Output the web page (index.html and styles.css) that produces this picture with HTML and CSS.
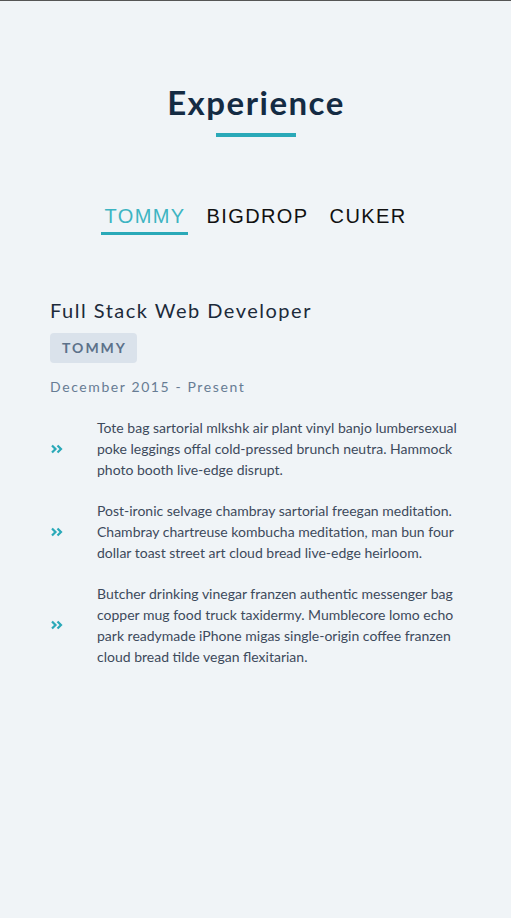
FILE: index.html
```html
<!DOCTYPE html>
<html>
<head>
<meta charset="utf-8">
<link rel="stylesheet" href="styles.css">
</head>
<body>
<section class="experience">
  <h1 class="title">Experience</h1>
  <div class="title-bar"></div>
  <nav class="tabs">
    <span class="tab active">TOMMY</span>
    <span class="tab">BIGDROP</span>
    <span class="tab">CUKER</span>
  </nav>
  <article class="job">
    <h2 class="job-title">Full Stack Web Developer</h2>
    <span class="badge">TOMMY</span>
    <p class="date">December 2015 - Present</p>
    <ul class="duties">
      <li class="duty">
        <svg class="icon" viewBox="0 0 12 10" width="12" height="10"><path d="M1 1.5 L4.5 5 L1 8.5 M6.5 1.5 L10 5 L6.5 8.5" fill="none" stroke="#2aa9b8" stroke-width="2.2"/></svg>
        <p>Tote bag sartorial mlkshk air plant vinyl banjo lumbersexual poke leggings offal cold-pressed brunch neutra. Hammock photo booth live-edge disrupt.</p>
      </li>
      <li class="duty">
        <svg class="icon" viewBox="0 0 12 10" width="12" height="10"><path d="M1 1.5 L4.5 5 L1 8.5 M6.5 1.5 L10 5 L6.5 8.5" fill="none" stroke="#2aa9b8" stroke-width="2.2"/></svg>
        <p>Post-ironic selvage chambray sartorial freegan meditation. Chambray chartreuse kombucha meditation, man bun four dollar toast street art cloud bread live-edge heirloom.</p>
      </li>
      <li class="duty">
        <svg class="icon" viewBox="0 0 12 10" width="12" height="10"><path d="M1 1.5 L4.5 5 L1 8.5 M6.5 1.5 L10 5 L6.5 8.5" fill="none" stroke="#2aa9b8" stroke-width="2.2"/></svg>
        <p>Butcher drinking vinegar franzen authentic messenger bag copper mug food truck taxidermy. Mumblecore lomo echo park readymade iPhone migas single-origin coffee franzen cloud bread tilde vegan flexitarian.</p>
      </li>
    </ul>
  </article>
</section>
</body>
</html>
```
FILE: styles.css
```css
html, body {
  margin: 0;
  padding: 0;
}
body {
  background: #f0f4f7;
  border-top: 1px solid #555;
  font-family: Lato, "Open Sans", sans-serif;
  min-height: 917px;
}
.experience {
  padding: 81px 49px 0 50px;
  display: flex;
  flex-direction: column;
}
.title {
  margin: 0;
  text-align: center;
  font-size: 33px;
  line-height: 40px;
  font-weight: 700;
  letter-spacing: 1.5px;
  color: #142b43;
}
.title-bar {
  align-self: center;
  width: 80px;
  height: 4px;
  background: #2aa9b8;
  margin-top: 11px;
}
.tabs {
  display: flex;
  justify-content: center;
  gap: 16px;
  margin-top: 65px;
  padding-right: 2px;
}
.tab {
  font-family: "Liberation Sans", Arial, sans-serif;
  font-size: 20px;
  letter-spacing: 1.4px;
  color: #111;
  line-height: 24px;
  padding: 2px 2px 4px 3px;
  border-bottom: 3px solid transparent;
}
.tab.active {
  color: #3db4c2;
  border-bottom-color: #2aa9b8;
}
.job {
  margin-top: 62px;
  display: flex;
  flex-direction: column;
  align-items: flex-start;
}
.job-title {
  margin: 0;
  font-size: 20px;
  font-weight: 400;
  letter-spacing: 1.5px;
  line-height: 26px;
  color: #1c2a3a;
}
.badge {
  margin-top: 10px;
  background: #dae2eb;
  color: #5c718a;
  font-size: 14px;
  font-weight: 700;
  letter-spacing: 2px;
  line-height: 30px;
  padding: 0 10px 0 12px;
  border-radius: 4px;
}
.date {
  margin: 14px 0 0;
  font-size: 14px;
  letter-spacing: 1.6px;
  line-height: 20px;
  color: #677c94;
}
.duties {
  list-style: none;
  margin: 20px 0 0;
  padding: 0;
  display: flex;
  flex-direction: column;
  gap: 20px;
}
.duty {
  display: flex;
  align-items: center;
}
.icon {
  flex: none;
  width: 12px;
  margin-left: 1px;
  margin-right: 34px;
}
.duty p {
  margin: 0;
  font-size: 14px;
  line-height: 21px;
  color: #3d4a5c;
}
```
